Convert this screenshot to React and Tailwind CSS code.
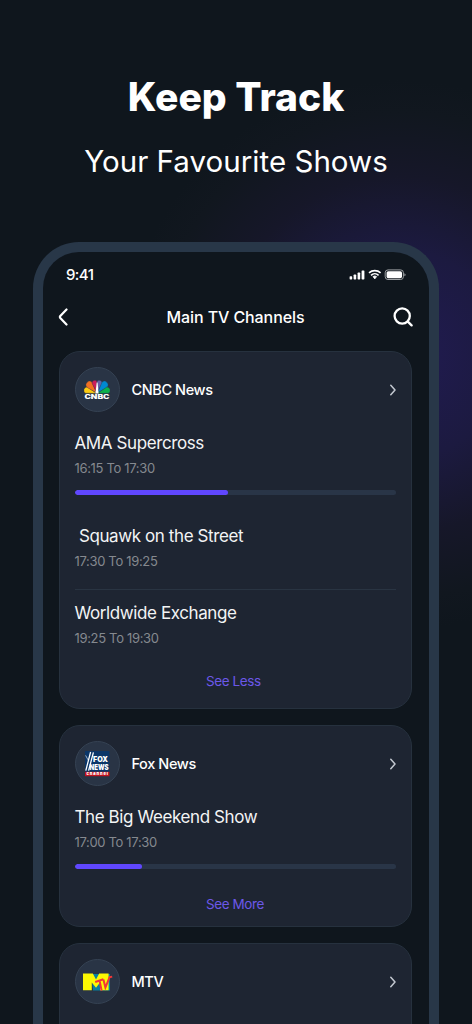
const CnbcLogo = () => (
  <svg className="overflow-visible" width="26" height="22" viewBox="0 0 26 22">
    <g stroke="#2b3646" strokeWidth="0.3">
      <path d="M12.4 14.2 L1.6 14.2 A3.3 3.3 0 0 1 3.1 8 Z" fill="#fccc12" />
      <path d="M12.4 13.8 L3.2 8.4 A3.5 3.5 0 0 1 8 3.2 Z" fill="#f37021" />
      <path d="M12.6 13 L8 4.2 A2.9 2.9 0 0 1 12.8 2 Z" fill="#cc1e5a" />
      <path d="M13.4 13 L18 4.2 A2.9 2.9 0 0 0 13.2 2 Z" fill="#6460aa" />
      <path d="M13.6 13.8 L22.8 8.4 A3.5 3.5 0 0 0 18 3.2 Z" fill="#0089d0" />
      <path d="M13.6 14.2 L24.4 14.2 A3.3 3.3 0 0 0 22.9 8 Z" fill="#0db14b" />
    </g>
    <path d="M12.7 3.5 L13.6 3.5 L14.6 14.4 H11.4 Z" fill="#fff" />
    <text x="0.5" y="20.2" textLength="25" lengthAdjust="spacingAndGlyphs" fill="#fff" fontFamily="Inter, sans-serif" fontSize="6" fontWeight="900">
      CNBC
    </text>
  </svg>
);

const FoxLogo = () => (
  <svg className="overflow-visible" width="26" height="26" viewBox="0 0 26 26">
    <rect x="1" width="24.4" height="20.8" fill="#0b3668" />
    <rect x="1" y="20.8" width="24.4" height="4.4" fill="#c4121f" />
    <path d="M1.8 19.6 L6.6 1 M4.6 19.6 L9.4 1.4" stroke="#fff" strokeWidth="1.3" />
    <path d="M1.6 4.4 L4.4 9.5" stroke="#fff" strokeWidth="0.6" />
    <g fill="#fff" fontFamily="Inter, sans-serif" fontWeight="900">
      <text x="9" y="11.4" fontSize="7.2" textLength="15" lengthAdjust="spacingAndGlyphs">FOX</text>
      <text x="5.6" y="19" fontSize="7.2" textLength="19" lengthAdjust="spacingAndGlyphs">NEWS</text>
      <text x="2.4" y="24.3" fontSize="4" textLength="21.6" lengthAdjust="spacing">channel</text>
    </g>
  </svg>
);

const MtvLogo = () => (
  <svg className="overflow-visible" width="29" height="18" viewBox="0 0 29 18">
    <path d="M8.4 1 H27 V17.4 H10 Z" fill="#087f9e" />
    <path d="M0 0.6 H9.8 L13 6.4 L16.2 0.6 H25.6 V17.2 H17 V9.4 L13 14.8 L8.8 9.4 V17.2 H0 Z" fill="#fcf803" />
    <g fill="none" stroke="#f23637" strokeWidth="2">
      <path d="M12.2 9 L20.4 6.2 M16.6 7.8 L18.6 17.6" />
      <path d="M20.4 6.6 L22.4 14.6 L26.6 4.2 L29.2 3.6" />
    </g>
  </svg>
);

const channels = [
  {
    name: 'CNBC News',
    logo: <CnbcLogo />,
    shows: [
      { title: 'AMA Supercross', time: '16:15 To 17:30', progress: 47.6 },
      { title: '\u00a0Squawk on the Street', time: '17:30 To 19:25' },
      { title: 'Worldwide Exchange', time: '19:25 To 19:30' },
    ],
    action: 'See Less',
  },
  {
    name: 'Fox News',
    logo: <FoxLogo />,
    shows: [{ title: 'The Big Weekend Show', time: '17:00 To 17:30', progress: 21 }],
    action: 'See More',
  },
  { name: 'MTV', logo: <MtvLogo />, shows: [] },
];

const StatusIcons = () => (
  <svg width="57" height="12" viewBox="0 0 57 12">
    <g fill="#fff">
      <rect x="0.6" y="7.2" width="2.6" height="3.3" rx="0.7" />
      <rect x="4.6" y="5.6" width="2.6" height="4.9" rx="0.7" />
      <rect x="8.6" y="3.6" width="2.6" height="6.9" rx="0.7" />
      <rect x="12.6" y="1.4" width="2.8" height="9.1" rx="0.7" />
      <path d="M24 7.6 a3 3 0 0 1 3.6 0 L25.8 9.9 Z" stroke="#fff" strokeWidth="0.8" />
    </g>
    <g fill="none" stroke="#fff" strokeWidth="1.6">
      <path d="M20 3.9 a8.6 8.6 0 0 1 11.6 0" />
      <path d="M22 6.3 a5.5 5.5 0 0 1 7.6 0" />
    </g>
    <rect x="36.2" y="0.9" width="18.2" height="9.6" rx="2.8" fill="none" stroke="#9ca0a3" strokeWidth="1" />
    <rect x="37.6" y="2.2" width="15.4" height="7" rx="1.6" fill="#fff" />
    <path d="M55.4 4.2 q1.2 0.5 1.2 1.5 t-1.2 1.5 Z" fill="#9ca0a3" />
  </svg>
);

const Show = ({ show }) => (
  <div>
    <p className="h-6 whitespace-nowrap text-[17px] leading-6 tracking-[-0.4px] text-[#f3f4f5]">{show.title}</p>
    <p className="mt-[3px] h-5 text-[13px] leading-5 tracking-[-0.33px] text-[#85898f]">{show.time}</p>
    {show.progress && (
      <div className="mt-3 ml-[0.5px] h-[5px] overflow-hidden rounded-full bg-[#293547]">
        <div className="h-full rounded-full bg-[#6047ff]" style={{ width: `${show.progress}%` }} />
      </div>
    )}
  </div>
);

const ChannelCard = ({ channel }) => {
  const { name, logo, shows, action } = channel;

  return (
    <section className="rounded-[21px] border border-[#26313e] bg-[#1e2532] pt-[15px] pr-[14.5px] pb-[17px] pl-[14.5px]">
      <header className="flex items-center">
        <div className="flex h-[45px] w-[45px] items-center justify-center rounded-full border border-[#354253] bg-[#293445]">
          {logo}
        </div>
        <h2 className="mt-px ml-3 text-[14.5px] font-medium tracking-[-0.4px] text-white">{name}</h2>
        <svg className="ml-auto" width="6" height="12" viewBox="0 0 6 12" fill="none">
          <path d="M0.8 1.2 L5 6 L0.8 10.8" stroke="#c3c8d0" strokeWidth="1.5" strokeLinecap="round" strokeLinejoin="round" />
        </svg>
      </header>

      {shows.length > 0 && (
        <div className="mt-[19px]">
          <Show show={shows[0]} />
          {shows.length > 1 && (
            <div className="mt-[29px] divide-y divide-[#293442]">
              {shows.slice(1).map((show, i) => (
                <div key={show.title} className={i === 0 ? 'pb-[18px]' : 'pt-[11px]'}>
                  <Show show={show} />
                </div>
              ))}
            </div>
          )}
        </div>
      )}

      {action && (
        <button className={`block h-5 w-full pl-[131.5px] text-left text-[13.5px] leading-5 tracking-[-0.42px] text-[#6c58e8] ${shows.length > 1 ? 'mt-[23px]' : 'mt-[25px]'}`}>
          {action}
        </button>
      )}
    </section>
  );
};

export default function App() {
  return (
    <div className="flex h-[1024px] w-[472px] flex-col overflow-hidden bg-[#0f161d] bg-[radial-gradient(circle_275px_at_400px_355px,#211b52_0%,#1c1a40_38%,#161729_65%,#11171f_88%,#0f161d_100%)] font-['Inter',sans-serif]">
      <div className="h-[242px] shrink-0 pt-[72px] text-center text-white">
        <h1 className="text-[39px] leading-[50px] font-extrabold">Keep Track</h1>
        <p className="mt-[14px] text-[29.5px] leading-[50px] tracking-[0.03px]">Your Favourite Shows</p>
      </div>

      <div className="mx-[33px] h-[900px] shrink-0 rounded-t-[46px] border-[10px] border-b-0 border-[#283748] bg-[#0f161d]">
        <div className="flex h-[46px] items-center justify-between pr-[23.5px] pl-[23px]">
          <span className="text-[15px] font-medium tracking-[-0.6px] text-white">9:41</span>
          <StatusIcons />
        </div>

        <div className="flex h-[37px] items-center justify-between pr-4 pl-[15px]">
          <svg width="10" height="18" viewBox="0 0 10 18" fill="none">
            <path d="M8.5 1.5 L2.3 8 Q1.5 9 2.3 10 L8.5 16.5" stroke="#fff" strokeWidth="2.2" strokeLinecap="round" />
          </svg>
          <h2 className="pl-[10px] text-[16px] font-medium tracking-[-0.1px] text-white">Main TV Channels</h2>
          <svg width="20" height="20" viewBox="0 0 20 20" fill="none" stroke="#fff" strokeWidth="2.3" strokeLinecap="round">
            <circle cx="9.2" cy="9" r="7.6" />
            <path d="M14.8 14.6 L18.6 18.4" />
          </svg>
        </div>

        <main className="mt-4 grid grid-rows-[358px_202px_202px] gap-4 pr-[17.5px] pl-4">
          {channels.map((channel) => (
            <ChannelCard key={channel.name} channel={channel} />
          ))}
        </main>
      </div>
    </div>
  );
}
